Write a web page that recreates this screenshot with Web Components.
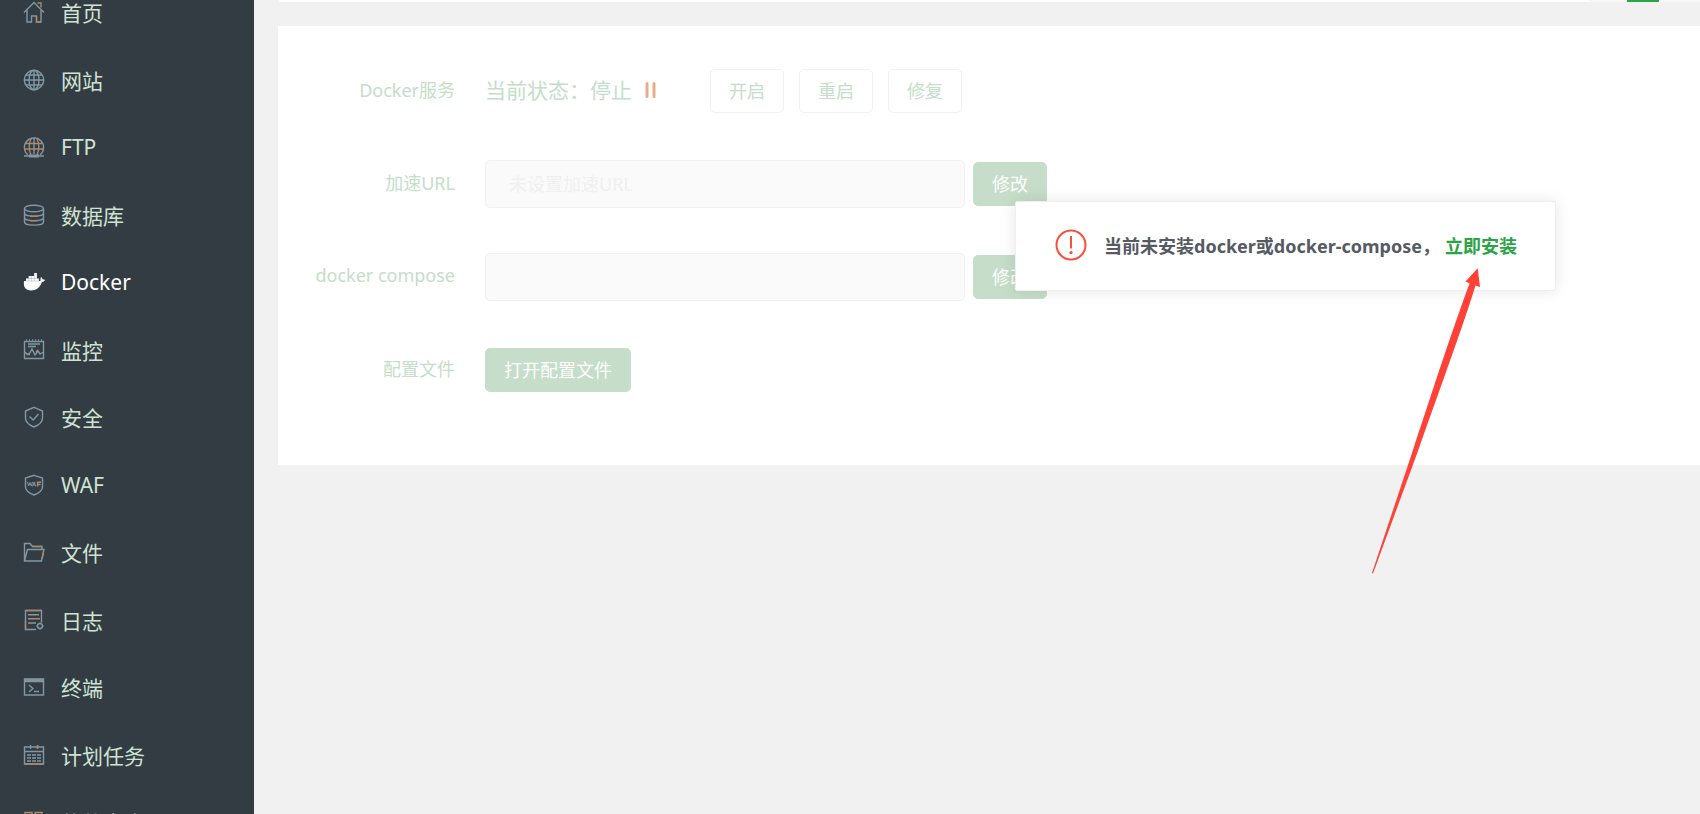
<!DOCTYPE html>
<html lang="zh-CN">
<head>
<meta charset="utf-8">
<title>Docker</title>
<style>
  body {
    margin: 0;
    background: #f1f1f1;
    font-family: "Noto Sans", "Noto Sans CJK SC", sans-serif;
    font-size: 18px;
    --green: #2aa444;
    --faded: #c5ddc9;
    --line: #f1f1f1;
    --red: #ff4238;
  }
</style>
</head>
<body>
<panel-app></panel-app>

<template id="t-app">
  <style>
    :host { display: grid; grid-template-columns: 254px minmax(0, 1fr); height: 100vh; overflow: hidden; }
    main { display: flex; flex-direction: column; gap: 24px; padding-left: 24px; min-width: 0; }
  </style>
  <side-menu>
    <menu-item icon="home">首页</menu-item>
    <menu-item icon="globe">网站</menu-item>
    <menu-item icon="ftp">FTP</menu-item>
    <menu-item icon="db">数据库</menu-item>
    <menu-item icon="docker" active>Docker</menu-item>
    <menu-item icon="monitor">监控</menu-item>
    <menu-item icon="shield">安全</menu-item>
    <menu-item icon="waf">WAF</menu-item>
    <menu-item icon="folder">文件</menu-item>
    <menu-item icon="log">日志</menu-item>
    <menu-item icon="terminal">终端</menu-item>
    <menu-item icon="cron">计划任务</menu-item>
    <menu-item icon="apps">软件商店</menu-item>
  </side-menu>
  <main>
    <tab-strip></tab-strip>
    <settings-panel></settings-panel>
  </main>
</template>

<template id="t-side">
  <style>
    :host { display: block; background: #343c43; overflow: hidden; }
    nav { display: flex; flex-direction: column; margin-top: -22px; }
  </style>
  <nav><slot></slot></nav>
</template>

<template id="t-item">
  <style>
    :host { display: block; padding-bottom: 1px; }
    :host(:nth-child(even)) { padding-bottom: 0; }
    a {
      display: flex; align-items: center; gap: 16px; height: 67px; padding-left: 23px;
      color: #cfe3d3; font-size: 21px; text-decoration: none; white-space: nowrap;
    }
    :host([active]) a { color: #fff; }
    svg { flex: none; width: 22px; height: 22px; fill: none; stroke: #8197a4; stroke-width: 1.4; color: #8197a4; }
    :host([active]) svg { color: #fff; }
    .w { stroke: #a98a6c; }
  </style>
  <a href="#"><svg viewBox="0 0 22 22" aria-hidden="true"></svg><span><slot></slot></span></a>
</template>

<template id="t-strip">
  <style>
    :host { display: flex; justify-content: flex-end; height: 2px; margin-left: 1px; background: #fff; border-bottom-left-radius: 2px; }
    div { display: flex; width: 111px; justify-content: center; background: #f7f7f7; }
    i { width: 32px; background: var(--green); margin-right: 3px; }
  </style>
  <div><i></i></div>
</template>

<template id="t-row">
  <style>
    :host { display: grid; grid-template-columns: 177px minmax(0, 1fr); column-gap: 30px; align-items: center; height: 48px; }
    .label { padding-bottom: 4px; text-align: right; color: var(--faded); white-space: nowrap; }
    .body { display: flex; align-items: center; gap: 8px; }
  </style>
  <div class="label"><slot name="label"></slot></div>
  <div class="body"><slot></slot></div>
</template>

<template id="t-btn">
  <style>
    :host { display: block; }
    button {
      box-sizing: border-box; display: block; height: 44px; padding: 0 18px;
      border: 1px solid var(--line); border-radius: 5px; background: #fff;
      color: var(--faded); font: inherit; line-height: 26px; white-space: nowrap;
    }
    :host([primary]) button { background: var(--faded); border-color: var(--faded); color: #fff; }
  </style>
  <button type="button"><slot></slot></button>
</template>

<template id="t-panel">
  <style>
    :host { display: block; position: relative; background: #fff; }
    form { display: flex; flex-direction: column; gap: 45px; padding: 41px 0 71px; }
    .status { padding-bottom: 4px; color: var(--faded); font-size: 21px; white-space: nowrap; }
    .pause { width: 11px; height: 16px; margin: 0 46px 2px 5px; }
    .group { display: flex; gap: 15px; }
    input {
      box-sizing: border-box; width: 480px; height: 48px; padding: 0 23px;
      border: 1px solid var(--line); border-radius: 5px; background: #fafafa;
      color: #888; font: inherit;
    }
    input::placeholder { color: #efefef; opacity: 1; }
    install-notice { position: absolute; left: 737px; top: 175px; }
    .arrow { position: absolute; left: 1094px; top: 242px; width: 109px; height: 306px; }
  </style>
  <form>
    <form-row><span slot="label">Docker服务</span>
      <span class="status">当前状态：停止</span>
      <svg class="pause" viewBox="0 0 11 16" aria-hidden="true"><path d="M2 1.500v13M9 1.500v13" stroke="#e9ac88" stroke-width="3" stroke-linecap="round"/></svg>
      <div class="group"><panel-button>开启</panel-button><panel-button>重启</panel-button><panel-button>修复</panel-button></div>
    </form-row>
    <form-row><label slot="label" for="mirror">加速URL</label>
      <input id="mirror" type="text" placeholder="未设置加速URL"><panel-button primary>修改</panel-button>
    </form-row>
    <form-row><label slot="label" for="compose">docker compose</label>
      <input id="compose" type="text"><panel-button primary>修改</panel-button>
    </form-row>
    <form-row><span slot="label">配置文件</span>
      <panel-button primary>打开配置文件</panel-button>
    </form-row>
  </form>
  <install-notice></install-notice>
  <svg class="arrow" viewBox="0 0 109 306" aria-hidden="true"><path d="M105.700 0.300 108 19 103.500 17.500C91 58 70 115 46 183L1 305.500 0 305 40 185C63 115 81 60 97.500 15.500L93.500 13.500Z" fill="#ff4238"/></svg>
</template>

<template id="t-notice">
  <style>
    :host {
      box-sizing: border-box; display: flex; align-items: center; gap: 17px; height: 90px; padding: 0 38px 0 39px;
      border: 1px solid #efefef; border-radius: 2px; background: #fff; box-shadow: 0 0 16px rgba(0, 0, 0, .1);
      color: #555a63; font-weight: 700; white-space: nowrap;
    }
    svg { flex: none; width: 32px; height: 32px; margin-bottom: 2px; }
    span { padding-bottom: 3px; }
    a { margin-left: 5px; color: var(--green); text-decoration: none; }
  </style>
  <svg viewBox="0 0 32 32" fill="none" stroke="#f4503c" stroke-width="2" aria-hidden="true"><circle cx="16" cy="16" r="14.500"/><path d="M16 7v12.500"/><circle cx="16" cy="23.500" r="1.600" fill="#f4503c" stroke="none"/></svg>
  <span>当前未安装docker或docker-compose，<a href="#">立即安装</a></span>
</template>

<script>
const ICONS = {
  home: '<path d="M1 11.500 11 1.500 21 11.500M4 9v12h4.500v-6h5v6H18V9"/><path class="w" d="M14.500 2h3.500v4.500M13.500 15v6h4.500"/>',
  globe: '<circle cx="11" cy="11" r="9.700"/><ellipse cx="11" cy="11" rx="5" ry="9.700"/><path d="M11 1v20M1.500 11h19M3 6h16M3 16h16"/>',
  ftp: '<path d="M5 19A9.600 9.600 0 1 1 17 19"/><path class="w" d="M8 19C5.500 14 5.500 7 8.500 2M14 19c2.500-5 2.500-12-.5-17M2.500 7.500h17M1.500 13h19"/><path d="M11 1.500V18M1 20h5M16 20h5"/><path d="M6 20h10" stroke-width="3"/>',
  db: '<ellipse cx="11" cy="4.500" rx="9.500" ry="3.300"/><path d="M1.500 4.500v13.500c0 4.200 19 4.200 19 0V4.500M1.500 9c0 4.200 19 4.200 19 0M1.500 13.500c0 4.200 19 4.200 19 0"/><path class="w" d="M7 12.200h8M7 16.700h8"/>',
  docker: '<path fill="currentColor" stroke="none" d="M3 7.500h2.700V5h5.500V2h2.700v5.500h2V10h1.500c.3-1.600-.2-2.800.6-4 1 .7 1.600 1.700 1.700 2.600.9-.1 1.700 0 2.300.4-.6 1.300-1.700 2-3.100 2-2 5.800-5.800 8.500-10.900 8.500C2.500 19.500.2 16 1 10h2z"/><path stroke="#9fb0b0" stroke-width=".5" d="M3 7.500h11M3 10h13M5.800 5v5M8.500 5v5M11.200 5v5"/>',
  monitor: '<path d="M1.500 2.500h19v17h-19zM5 5h12M5 7.500h8M2 13l2.500 2.500 2-1L9 10l3 6 3-4 2 3 3.500-2"/><path class="w" d="M4 15.500h3M13 13l2-2"/><path d="M3 1h16" stroke-dasharray="1 2"/>',
  shield: '<path d="M11 1.300 19.500 5v7c0 4-3.500 7-8.500 9-5-2-8.500-5-8.500-9V5z"/><path d="m6.500 10.500 3.700 3.500 5.300-6"/>',
  waf: '<path d="M11 1.300 19.500 4v9c0 3-3.500 6-8.500 8-5-2-8.500-5-8.500-8V4z"/><path stroke-width="1" d="m4.500 8 1.200 4 1.300-3.500 1.300 3.500 1.200-4M9.500 12.500 11.200 8l1.500 4.500M10.200 11h2"/><path class="w" d="M14.500 12.500V8.300H18M14.500 10.500h3"/>',
  folder: '<path d="M1.500 20V2.500h5.500l2.500 3h9.500v3M1.500 20 4.500 8.500h16.500L18.500 20z"/><path class="w" d="M9.500 5.500H19M20.500 11l-1.500 7"/>',
  log: '<path d="M13 20.500H2.500v-19h16v12"/><path class="w" d="M5 9.800h12M2.500 12v8.500M3 1.500h15.500"/><path d="M5 5.800h11M5 14h8"/><circle cx="17" cy="17" r="2.500"/><path d="M17 13.500v1M17 19.500v1M13.500 17h1M19.500 17h1"/>',
  terminal: '<path d="M1.500 3h19v16h-19z"/><path d="M1.500 4.500h19" stroke-width="3.500"/><path class="w" stroke-dasharray="2 2" d="M4 4.500h13"/><path d="m6 9 4 3.500-4 3.500M11 15.500h5"/>',
  cron: '<path d="M1.500 3h19v17h-19zM1.500 7.500h19M7.500 1v4M14.500 1v4"/><path d="M4 11h14M4 14h14M4 17h14" stroke-dasharray="4 1"/><path class="w" d="M14.500 1v4M2 20h18"/>',
  apps: '<path class="w" d="M2 1.500h7v7H2zM12 1.500h7v7h-7zM2 12h7v7H2zM12 12h7v7h-7z"/>'
};

function define(name, templateId, setup) {
  customElements.define(name, class extends HTMLElement {
    constructor() {
      super();
      const root = this.attachShadow({ mode: 'open' });
      root.append(document.getElementById(templateId).content.cloneNode(true));
    }
    connectedCallback() { if (setup) setup(this); }
  });
}

define('menu-item', 't-item', el => {
  el.shadowRoot.querySelector('svg').innerHTML = ICONS[el.getAttribute('icon')] || '';
});
define('side-menu', 't-side');
define('tab-strip', 't-strip');
define('panel-button', 't-btn');
define('form-row', 't-row');
define('install-notice', 't-notice');
define('settings-panel', 't-panel');
define('panel-app', 't-app');
</script>
</body>
</html>
